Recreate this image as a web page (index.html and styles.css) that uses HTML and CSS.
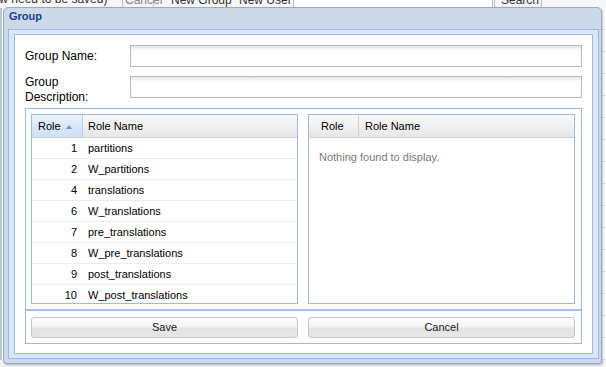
FILE: index.html
```html
<!DOCTYPE html>
<html>
<head>
<meta charset="utf-8">
<title>Group</title>
<link rel="stylesheet" href="styles.css">
</head>
<body>
<div class="page">
  <div class="toolbar">
    <span class="tb-text">now need to be saved)</span>
    <span class="tb-btn tb-cancel">Cancel</span>
    <span class="tb-btn tb-newgroup">New Group</span>
    <span class="tb-btn tb-newuser">New User</span>
    <span class="tb-input"></span>
    <span class="tb-btn tb-search">Search</span>
  </div>
  <div class="bg-rows">
    <div class="bg-row"></div><div class="bg-row"></div><div class="bg-row"></div><div class="bg-row"></div>
    <div class="bg-row"></div><div class="bg-row"></div><div class="bg-row"></div><div class="bg-row"></div>
    <div class="bg-row"></div><div class="bg-row"></div><div class="bg-row"></div><div class="bg-row"></div>
    <div class="bg-row"></div><div class="bg-row"></div><div class="bg-row"></div><div class="bg-row"></div>
  </div>
</div>

<div class="window">
  <div class="win-header">Group</div>
  <div class="win-frame">
    <div class="win-body">
      <div class="form-row">
        <label class="field-label">Group Name:</label>
        <input class="text-input" type="text">
      </div>
      <div class="form-row form-row-tall">
        <label class="field-label">Group<br>Description:</label>
        <input class="text-input" type="text">
      </div>
      <div class="fieldset">
        <div class="grids">
          <div class="grid">
            <div class="grid-head">
              <div class="hd hd-num sorted">Role<span class="sort-arrow"></span></div>
              <div class="hd hd-name">Role Name</div>
            </div>
            <div class="grid-body">
              <div class="row"><div class="c-num">1</div><div class="c-name">partitions</div></div>
              <div class="row"><div class="c-num">2</div><div class="c-name">W_partitions</div></div>
              <div class="row"><div class="c-num">4</div><div class="c-name">translations</div></div>
              <div class="row"><div class="c-num">6</div><div class="c-name">W_translations</div></div>
              <div class="row"><div class="c-num">7</div><div class="c-name">pre_translations</div></div>
              <div class="row"><div class="c-num">8</div><div class="c-name">W_pre_translations</div></div>
              <div class="row"><div class="c-num">9</div><div class="c-name">post_translations</div></div>
              <div class="row"><div class="c-num">10</div><div class="c-name">W_post_translations</div></div>
            </div>
          </div>
          <div class="grid">
            <div class="grid-head">
              <div class="hd hd-num hd-num-right">Role</div>
              <div class="hd hd-name">Role Name</div>
            </div>
            <div class="grid-body">
              <div class="empty">Nothing found to display.</div>
            </div>
          </div>
        </div>
        <div class="buttons">
          <button class="btn" type="button">Save</button>
          <button class="btn" type="button">Cancel</button>
        </div>
      </div>
    </div>
  </div>
</div>
</body>
</html>
```

FILE: styles.css
```css
html, body {
  margin: 0;
  padding: 0;
}

body {
  width: 606px;
  height: 367px;
  overflow: hidden;
  position: relative;
  background: #f3f3f3;
  font-family: "Liberation Sans", Arial, sans-serif;
  color: #000;
}

/* ---------- background page ---------- */
.page {
  width: 606px;
}

.toolbar {
  height: 8px;
  overflow: hidden;
  display: flex;
  align-items: flex-end;
  background: #f7f7f7;
  font-size: 12px;
  color: #333;
}

.tb-text,
.tb-btn,
.tb-input {
  flex: none;
  height: 16px;
  line-height: 14px;
  white-space: nowrap;
  box-sizing: border-box;
}

.tb-text {
  margin-left: -14px;
  width: 136px;
}

.tb-btn {
  border: 1px solid #c3c3c3;
  border-radius: 2px;
  padding: 0 6px;
  background: #f4f4f4;
}

.tb-cancel {
  width: 32px;
  padding: 0 2px;
  color: #888;
}

.tb-newgroup {
  margin-left: 10px;
  width: 66px;
  border-color: transparent;
  background: transparent;
}

.tb-newuser {
  margin-left: 2px;
  width: 60px;
  border-color: transparent;
  background: transparent;
}

.tb-input {
  width: 200px;
  margin-left: 1px;
  border: 1px solid #bbb;
  background: #fff;
}

.tb-search {
  margin-left: 1px;
  width: 48px;
}

.bg-rows {
  background: #fff;
  border-left: 2px solid #b8c7da;
}

.bg-row {
  height: 21px;
  border-bottom: 1px solid #e2e2e2;
}

/* ---------- window ---------- */
.window {
  position: absolute;
  left: 3px;
  top: 7px;
  width: 599px;
  height: 357px;
  box-sizing: border-box;
  border: 1px solid #9aaac0;
  border-radius: 5px 5px 3px 3px;
  background: #cdd9e8;
  padding: 0 2px 4px 4px;
  display: flex;
  flex-direction: column;
  box-shadow: 1px 1px 2px rgba(0, 0, 0, 0.25);
}

.win-header {
  flex: none;
  height: 21px;
  box-sizing: border-box;
  padding: 1px 0 0 1px;
  font-weight: bold;
  font-size: 11px;
  line-height: 14px;
  color: #15428b;
}

.win-frame {
  flex: 1;
  display: flex;
  border: 1px solid #99bbe8;
  background: #dce6f4;
  padding: 4px 5px;
}

.win-body {
  flex: 1;
  display: flex;
  flex-direction: column;
  border: 1px solid #99bbe8;
  background: #fff;
  padding: 10px 10px 9px 10px;
}

/* ---------- form ---------- */
.form-row {
  display: flex;
  align-items: flex-start;
  height: 22px;
}

.form-row-tall {
  margin-top: 8px;
  height: 30px;
}

.field-label {
  width: 105px;
  flex: none;
  font-size: 12px;
  line-height: 22px;
  color: #000;
}

.form-row-tall .field-label {
  line-height: 15px;
}

.text-input {
  flex: 1;
  height: 22px;
  box-sizing: border-box;
  margin: 0;
  padding: 0 3px;
  border: 1px solid #b5b8c8;
  background: linear-gradient(#e6e6e6, #fbfbfb 4px, #fff 6px);
  font: 12px "Liberation Sans", Arial, sans-serif;
  outline: none;
}

.form-row-tall .text-input {
  margin-top: 1px;
}

/* ---------- fieldset with grids ---------- */
.fieldset {
  margin-top: 3px;
  height: 236px;
  box-sizing: border-box;
  border: 1px solid #99bbe8;
  display: flex;
  flex-direction: column;
}

.grids {
  display: flex;
  gap: 10px;
  padding: 5px 6px 5px 5px;
}

.grid {
  flex: 1;
  height: 190px;
  box-sizing: border-box;
  border: 1px solid #99bbe8;
  display: flex;
  flex-direction: column;
  overflow: hidden;
}

.grid-head {
  flex: none;
  display: flex;
  height: 23px;
  box-sizing: border-box;
  border-bottom: 1px solid #d0d0d0;
  background: linear-gradient(#fafafa, #f1f1f1 50%, #e5e6e8);
  font-size: 11px;
  line-height: 22px;
  color: #000;
}

.hd {
  box-sizing: border-box;
  white-space: nowrap;
}

.hd-num {
  flex: none;
  width: 51px;
  padding-left: 6px;
  border-right: 1px solid #d0d0d0;
  display: flex;
  align-items: center;
}

.hd-num-right {
  width: 50px;
  padding-left: 12px;
}

.hd-name {
  flex: 1;
  padding-left: 5px;
}

.grid .hd-num-right + .hd-name {
  padding-left: 6px;
}

.sorted {
  background: linear-gradient(#edf4fd, #dae7f8 50%, #cfdff4);
  border-right-color: #b9cde8;
}

.sort-arrow {
  display: inline-block;
  margin-left: 5px;
  margin-top: 1px;
  width: 0;
  height: 0;
  border-left: 3.5px solid transparent;
  border-right: 3.5px solid transparent;
  border-bottom: 4px solid #6a94c8;
}

.grid-body {
  flex: 1;
  overflow: hidden;
  background: #fff;
}

.row {
  display: flex;
  height: 21px;
  box-sizing: border-box;
  border-bottom: 1px solid #ededed;
  font-size: 11px;
  line-height: 20px;
  color: #000;
}

.c-num {
  flex: none;
  width: 51px;
  box-sizing: border-box;
  padding-right: 6px;
  text-align: right;
}

.c-name {
  flex: 1;
  padding-left: 5px;
  white-space: nowrap;
}

.empty {
  padding: 12px 0 0 10px;
  font-size: 11px;
  line-height: 14px;
  color: #7a7a7a;
}

/* ---------- buttons ---------- */
.buttons {
  display: flex;
  gap: 10px;
  border-top: 2px solid #a4c1e9;
  padding: 6px 6px 5px 5px;
}

.btn {
  flex: 1;
  height: 21px;
  margin: 0;
  padding: 0;
  box-sizing: border-box;
  border: 1px solid #c6c6c6;
  border-radius: 3px;
  background: linear-gradient(#fdfdfd, #f4f4f4 48%, #e3e3e3 52%, #e6e6e6);
  font: 11px "Liberation Sans", Arial, sans-serif;
  color: #222;
  line-height: 19px;
}
```
